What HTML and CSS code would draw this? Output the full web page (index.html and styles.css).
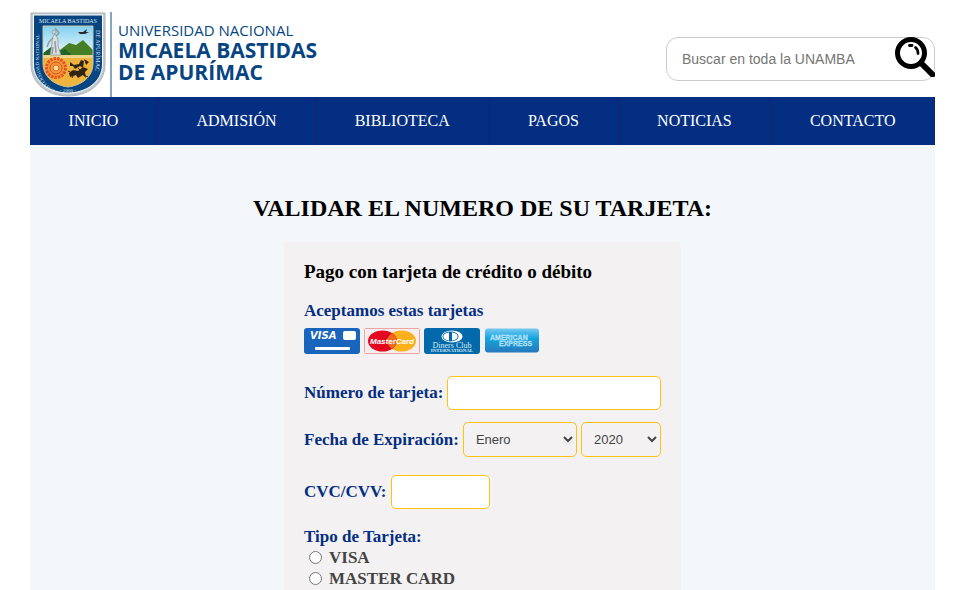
FILE: index.html
```html
<!DOCTYPE html>
<html lang="es">
<head>
<meta charset="utf-8">
<title>UNAMBA - Validar tarjeta</title>
<link rel="stylesheet" href="styles.css">
</head>
<body>
<div class="page">
  <header class="header">
    <a class="brand" href="#">
      <svg class="crest" viewBox="0 0 76 85" aria-hidden="true">
        <defs>
          <clipPath id="inner"><path d="M13 14H63V51C63 65 52 73 38 75C24 73 13 65 13 51Z"/></clipPath>
          <linearGradient id="sky" x2="0" y2="1"><stop stop-color="#7fd0f0"/><stop offset="1" stop-color="#f4faf8"/></linearGradient>
          <path id="arcL" d="M25 78Q9 70 9 50V15"/>
          <path id="arcR" d="M66 18V50Q66 69 49 78"/>
        </defs>
        <path d="M1 1H75V52C75 72 58 84 38 84S1 72 1 52Z" fill="#c3cace" stroke="#aab3ba"/>
        <path d="M3.500 3H72.500V52C72.500 70 56 81 38 81S3.500 70 3.500 52Z" fill="#064581" stroke="#fff"/>
        <g clip-path="url(#inner)">
          <path d="M12 13H64V46H12Z" fill="url(#sky)"/>
          <path d="M12 43L22 35L30 38L39 31L46 33L53 28L64 39V48H12Z" fill="#477f27"/>
          <path d="M12 42L21 35L27 40L35 37L42 43H12Z" fill="#23632a"/>
          <path d="M12 43H64V76H12Z" fill="#efb43b"/>
          <path d="M12 43H64V46H12Z" fill="#e8d48b"/>
        </g>
        <path d="M13 14H63V51C63 65 52 73 38 75C24 73 13 65 13 51Z" fill="none" stroke="#c9c6a7"/>
        <path d="M20 43L22 32L22 26L25 22L28 27L28 34L31 43Z" fill="#d9dde0" stroke="#83909a" stroke-width=".7"/>
        <circle cx="24" cy="20" r="2" fill="#cbd0d3" stroke="#75818b" stroke-width=".5"/>
        <path d="M26 24L29 21L25 16M23 26L19 30L17 35M25 29L26 41M23 35L22 42" fill="none" stroke="#929ba3" stroke-width="1.500"/>
        <path d="M48 20L53 20L57 17L56 20L59 20L55 22L50 22Z" fill="#252b2a"/>
        <circle cx="26" cy="56" r="9.500" fill="#f39b36" stroke="#e75027" stroke-width="3" stroke-dasharray="2.500 1"/>
        <circle cx="26" cy="56" r="6" fill="none" stroke="#db4a25"/>
        <circle cx="26" cy="56" r="3" fill="#ffe092" stroke="#d95b29"/>
        <path d="M40 50L44 53L49 52L51 48L54 49L53 56L50 54L45 57L43 54L40 54ZM39 61L43 58L48 59L53 55L58 57L55 60L56 66L53 63L48 66L46 63L40 65ZM54 47L59 50L56 53Z" fill="#302417"/>
        <path d="M38 59L44 62L42 66M50 58L48 56M52 62L58 65" stroke="#302417" fill="none"/>
        <text class="crest-top" x="38" y="11" text-anchor="middle">MICAELA BASTIDAS</text>
        <text class="crest-side"><textPath href="#arcL">UNIVERSIDAD NACIONAL</textPath></text>
        <text class="crest-side crest-right"><textPath href="#arcR">DE APURÍMAC</textPath></text>
        <text class="crest-year" x="38" y="80" text-anchor="middle">- 2000 -</text>
      </svg>
      <span class="brand-text">
        <span class="brand-light">UNIVERSIDAD NACIONAL</span>
        <strong>MICAELA BASTIDAS</strong>
        <strong>DE APURÍMAC</strong>
      </span>
    </a>
    <form class="search">
      <input type="search" aria-label="Buscar" placeholder="Buscar en toda la UNAMBA">
      <button type="button" aria-label="Buscar">
        <svg viewBox="0 0 40 40" aria-hidden="true">
          <circle cx="16" cy="16" r="13.500" fill="#fff" stroke="#000" stroke-width="5"/>
          <path d="M26 26L37.500 37.500" stroke="#000" stroke-width="6" stroke-linecap="round"/>
          <path d="M14.500 8.500H17M20.500 10.500Q23 12.500 23 16.500" fill="none" stroke="#000" stroke-width="2.800" stroke-linecap="round"/>
        </svg>
      </button>
    </form>
  </header>
  <nav class="nav">
    <a href="#">INICIO</a>
    <a href="#">ADMISIÓN</a>
    <a href="#">BIBLIOTECA</a>
    <a href="#">PAGOS</a>
    <a href="#">NOTICIAS</a>
    <a href="#">CONTACTO</a>
  </nav>
  <main class="main">
    <h1>VALIDAR EL NUMERO DE SU TARJETA:</h1>
    <form class="card">
      <h2>Pago con tarjeta de crédito o débito</h2>
      <h3>Aceptamos estas tarjetas</h3>
      <div class="logos">
        <svg viewBox="0 0 56 26" role="img" aria-label="Visa">
          <rect width="56" height="26" rx="3" fill="#1965bd"/>
          <text class="visa" x="6" y="11">VISA</text>
          <rect x="39" y="3" width="13" height="9" rx="2" fill="#fff"/>
          <rect x="11" y="19" width="35" height="3" rx="1" fill="#fff"/>
        </svg>
        <svg viewBox="0 0 56 26" role="img" aria-label="MasterCard">
          <rect x=".5" y=".5" width="55" height="25" rx="1" fill="#f5eeee" stroke="#f0a3a5"/>
          <ellipse cx="37.500" cy="13" rx="14.500" ry="10.500" fill="#fcb11c"/>
          <ellipse cx="18.500" cy="13" rx="14.500" ry="10.500" fill="#e40520"/>
          <path d="M28 5Q33 9 33 13T28 21Q23 17 23 13T28 5Z" fill="#ee6a1c"/>
          <text class="master" x="28" y="16" text-anchor="middle">MasterCard</text>
        </svg>
        <svg viewBox="0 0 56 26" role="img" aria-label="Diners Club International">
          <rect width="56" height="26" rx="3" fill="#026aab"/>
          <ellipse cx="28" cy="8.500" rx="10.500" ry="6" fill="#fff"/>
          <ellipse cx="26.500" cy="8.500" rx="8" ry="5" fill="#026aab"/>
          <path d="M25 4.500C17.500 5 17.500 12 25 12.500ZM28 4.500C35.500 5 35.500 12 28 12.500Z" fill="#fff"/>
          <text class="diners" x="28" y="19.500" text-anchor="middle">Diners Club</text>
          <text class="diners-small" x="28" y="24" text-anchor="middle">INTERNATIONAL</text>
        </svg>
        <svg viewBox="0 0 56 26" role="img" aria-label="American Express">
          <defs><linearGradient id="amex" x2="0" y2="1"><stop stop-color="#78c8ef"/><stop offset=".4" stop-color="#14a6df"/><stop offset="1" stop-color="#2878bd"/></linearGradient></defs>
          <rect x="1" y=".5" width="54" height="24" rx="3" fill="url(#amex)"/>
          <text class="amex" x="6" y="12">AMERICAN</text>
          <text class="amex" x="15" y="18">EXPRESS</text>
        </svg>
      </div>
      <div class="row row-number">
        <label for="number">Número de tarjeta:</label>
        <input id="number" type="text">
      </div>
      <div class="row row-date">
        <label for="month">Fecha de Expiración:</label>
        <select id="month"><option>Enero</option><option>Febrero</option><option>Marzo</option></select>
        <select id="year" aria-label="Año"><option>2020</option><option>2021</option><option>2022</option></select>
      </div>
      <div class="row row-cvc">
        <label for="cvc">CVC/CVV:</label>
        <input id="cvc" type="text">
      </div>
      <fieldset>
        <legend>Tipo de Tarjeta:</legend>
        <label><input type="radio" name="type"> VISA</label>
        <label><input type="radio" name="type"> MASTER CARD</label>
      </fieldset>
    </form>
  </main>
</div>
</body>
</html>
```
FILE: styles.css
```css
* { box-sizing: border-box; }
body {
  margin: 0;
  background: #fff;
  font-family: "Liberation Serif", "Times New Roman", serif;
  font-size: 16px;
}
.page {
  display: flex;
  flex-direction: column;
  min-height: 100vh;
  padding: 0 32px 0 30px;
}
.header {
  display: flex;
  justify-content: space-between;
  align-items: flex-start;
  padding-top: 12px;
}
.brand {
  display: flex;
  height: 85px;
  color: #064581;
  text-decoration: none;
  font-family: "Open Sans", sans-serif;
}
.crest { width: 76px; height: 85px; }
.crest text { fill: #dce6ee; font-family: "Liberation Serif", serif; }
.crest .crest-top { font-size: 6px; }
.crest .crest-side { font-size: 5px; }
.crest .crest-right { font-size: 6px; }
.crest .crest-year { font-size: 5px; }
.brand-text {
  display: flex;
  flex-direction: column;
  margin-left: 4px;
  padding: 9px 0 0 6px;
  border-left: 2px solid #8aa5c2;
  font-size: 21px;
  line-height: 22px;
  white-space: nowrap;
}
.brand-light { font-size: 15px; line-height: 18px; }
.search {
  display: flex;
  justify-content: space-between;
  width: 269px;
  height: 44px;
  margin-top: 25px;
  border: 1px solid #ccc;
  border-radius: 12px;
}
.search input {
  flex: 1;
  min-width: 0;
  padding: 0 15px;
  border: 0;
  background: none;
  font: 14px "Liberation Sans", Arial, sans-serif;
}
.search input::placeholder { color: #757575; }
.search button {
  width: 40px;
  height: 40px;
  margin: -1px -1px 0 0;
  padding: 0;
  border: 0;
  background: none;
}
.search svg { display: block; }
.nav { display: flex; background: #042e82; }
.nav a {
  flex: 1 1 auto;
  height: 48px;
  border-right: 1px solid #1c2266;
  color: #fff;
  line-height: 48px;
  text-align: center;
  text-decoration: none;
}
.main {
  flex: 1;
  display: flex;
  flex-direction: column;
  align-items: center;
  background: #f3f7fa;
}
h1 { margin: 49px 0 20px; font-size: 24px; line-height: 28px; }
.card {
  flex: 1;
  width: 397px;
  padding: 20px 20px 0;
  background: #f3f1f2;
  color: #042e82;
  font-size: 17px;
}
h2 { margin: 0; color: #000; font-size: 19px; line-height: 20px; }
h3 { margin: 20px 0 8px; font-size: 17px; line-height: 18px; }
.logos { display: flex; gap: 4px; }
.logos svg { width: 56px; height: 26px; }
.visa { fill: #fff; font: italic bold 10px "DejaVu Sans", sans-serif; }
.master { fill: #fff; font: italic bold 8px "Liberation Sans", sans-serif; }
.diners { fill: #d8e9f3; font: 8px "Liberation Serif", serif; }
.diners-small { fill: #d8e9f3; font: bold 5px "Liberation Serif", serif; }
.amex { fill: #8ad0ef; stroke: #d5effa; stroke-width: .3px; font: bold 7px "Liberation Sans", sans-serif; }
.row { display: flex; align-items: center; gap: 4px; font-weight: bold; }
.row label { white-space: nowrap; }
.row input, .row select {
  min-width: 0;
  border: 1px solid #fec20f;
  border-radius: 5px;
}
.row input { height: 34px; background: #fff; }
.row select {
  height: 35px;
  padding: 0 0 0 8px;
  background: #f3f1f2;
  color: #444;
  font: 13px "Liberation Sans", Arial, sans-serif;
}
.row-number { margin-top: 22px; }
#number { flex: 1; }
.row-date { margin-top: 12px; }
#month { flex: 1; }
#year { width: 80px; }
.row-cvc { margin-top: 18px; }
#cvc { width: 99px; }
fieldset { margin: 18px 0 0; padding: 0; border: 0; font-weight: bold; }
legend { padding: 0; line-height: 20px; }
fieldset label { display: flex; align-items: center; color: #444; line-height: 21px; }
fieldset input { margin: 0 7px 0 5px; }
```
